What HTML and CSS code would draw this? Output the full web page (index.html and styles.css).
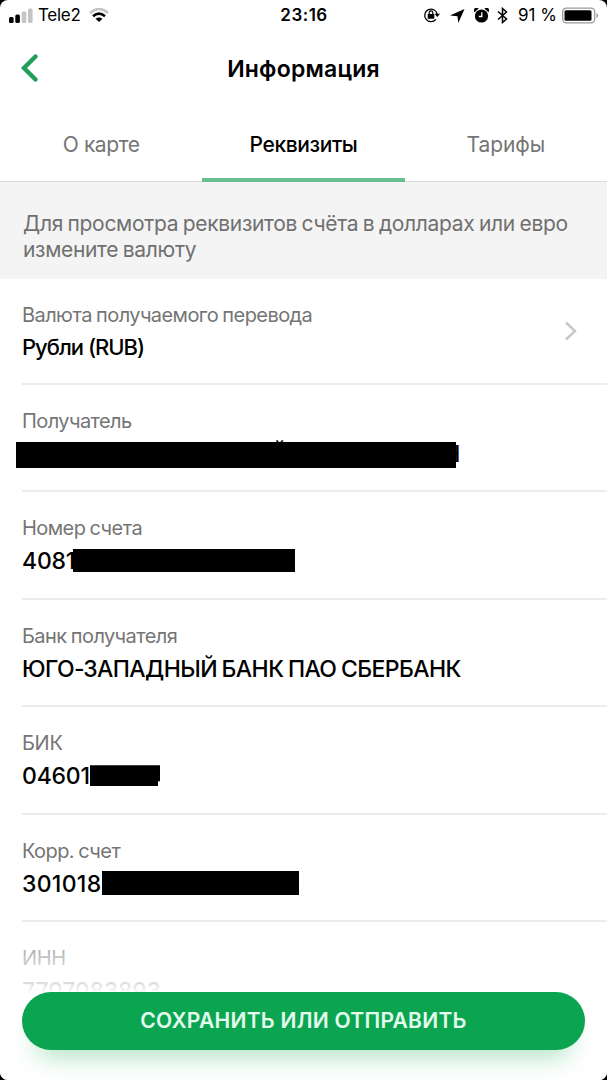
FILE: index.html
```html
<!DOCTYPE html>
<html lang="ru">
<head>
  <meta charset="UTF-8">
  <title>Информация</title>
  <link rel="stylesheet" href="styles.css">
</head>
<body>
  <div class="screen">
    <!-- Status bar -->
    <div class="status-bar">
      <div class="status-left">
        <svg class="signal" width="24" height="16" viewBox="0 0 24 16">
          <rect x="0" y="9" width="4.600" height="6" rx="1.5"/>
          <rect x="6.3" y="6.5" width="4.600" height="8.500" rx="1.5"/>
          <rect class="dim" x="12.700" y="3.500" width="4.600" height="11.500" rx="1.5"/>
          <rect class="dim" x="19" y="0.500" width="4.600" height="14.500" rx="1.5"/>
        </svg>
        <span class="carrier">Tele2</span>
        <svg class="wifi" width="20" height="15" viewBox="0 0 20 15">
          <path class="dim" d="M1 5 Q10 -3 19 5" />
          <path d="M4 8.200 Q10 3.200 16 8.200"/>
          <path class="fill" d="M10 14 L6.500 10.800 Q10 8.200 13.500 10.800 Z"/>
        </svg>
      </div>
      <span class="clock">23:16</span>
      <div class="status-right">
        <svg class="lock" width="17" height="16" viewBox="0 0 17 16">
          <path d="M12.800 12.500 A6.300 6.300 0 1 1 14.200 7" fill="none" stroke="#000" stroke-width="1.300"/>
          <path d="M11.500 6.800 H17 L14.300 10 Z"/>
          <rect x="4.700" y="7" width="6.600" height="4.800" rx="0.500"/>
          <path d="M6.200 7 V5.700 a1.800 1.800 0 0 1 3.600 0 V7" fill="none" stroke="#000" stroke-width="1.200"/>
        </svg>
        <svg class="location" width="15" height="14" viewBox="0 0 15 14">
          <path d="M14.500 0 L8.300 14 L7.500 7.200 L0 6.500 Z"/>
        </svg>
        <svg class="alarm" width="15" height="15" viewBox="0 0 15 15">
          <circle cx="7.500" cy="8" r="6.600"/>
          <path d="M0.500 4.200 A2.700 2.700 0 0 1 4.600 0.600 Z M14.500 4.200 A2.700 2.700 0 0 0 10.400 0.600 Z"/>
          <path d="M7.800 4.300 V8.500 H4.800" fill="none" stroke="#fff" stroke-width="1.300"/>
        </svg>
        <svg class="bluetooth" width="11" height="17" viewBox="0 0 11 17">
          <path d="M1 4.500 L9.500 12 L5.500 15.500 V1.500 L9.500 5 L1 12.500" fill="none" stroke="#000" stroke-width="1.500"/>
        </svg>
        <span class="percent">91 %</span>
        <svg class="battery" width="37" height="17" viewBox="0 0 37 17">
          <rect x="0.700" y="1.200" width="32" height="14.600" rx="3.500" fill="none" stroke="#999" stroke-width="1.300"/>
          <rect x="2.500" y="3.200" width="27" height="10.600" rx="1.500"/>
          <path d="M34.500 6 Q36.200 6.500 36.200 8.500 Q36.200 10.500 34.500 11 Z" fill="#999"/>
        </svg>
      </div>
    </div>

    <div class="nav-bar">
      <svg class="back" width="18" height="30" viewBox="0 0 18 30">
        <path d="M15.500 3.500 L4 15 L15.500 26.500"/>
      </svg>
      <h1>Информация</h1>
    </div>

    <div class="tabs">
      <div class="tab">О карте</div>
      <div class="tab active">Реквизиты</div>
      <div class="tab rates">Тарифы</div>
    </div>

    <div class="notice">Для просмотра реквизитов счёта в долларах или евро<br>измените валюту</div>

    <!-- Account details -->
    <div class="details">
      <div class="row currency">
        <div>
          <div class="label">Валюта получаемого перевода</div>
          <div class="value rub">Рубли (RUB)</div>
        </div>
        <svg class="chevron" width="14" height="22" viewBox="0 0 14 22">
          <path d="M2 2.500 L11 11 L2 19.500"/>
        </svg>
      </div>
      <div class="row">
        <div class="label">Получатель</div>
        <div class="value recipient"><span>Й</span><span>Н</span><i class="mask mask-name"></i></div>
      </div>
      <div class="row">
        <div class="label">Номер счета</div>
        <div class="value account">4081<i class="mask mask-account"></i></div>
      </div>
      <div class="row">
        <div class="label">Банк получателя</div>
        <div class="value bank">ЮГО-ЗАПАДНЫЙ БАНК ПАО СБЕРБАНК</div>
      </div>
      <div class="row">
        <div class="label caps">БИК</div>
        <div class="value bik">04601<i class="mask mask-bik"></i></div>
      </div>
      <div class="row">
        <div class="label">Корр. счет</div>
        <div class="value corr">301018<i class="mask mask-corr"></i></div>
      </div>
      <div class="row">
        <div class="label caps">ИНН</div>
        <div class="value inn">7707083893</div>
      </div>
    </div>

    <div class="footer">
      <button class="save">СОХРАНИТЬ ИЛИ ОТПРАВИТЬ</button>
    </div>
  </div>
</body>
</html>
```
FILE: styles.css
```css
* {
  box-sizing: border-box;
}
body {
  margin: 0;
  background-color: #000;
  font-family: Inter, "Liberation Sans", sans-serif;
}
.screen {
  position: relative;
  height: 1080px;
  overflow: hidden;
  background-color: #fff;
  border-radius: 8px;
}

/* Status bar */
.status-bar {
  display: grid;
  grid-template-columns: 1fr auto 1fr;
  align-items: center;
  height: 31px;
  padding: 0 8px 0 9px;
  font-size: 17px;
  line-height: 31px;
}
.status-left, .status-right {
  display: flex;
  align-items: center;
}
.status-right {
  justify-content: flex-end;
}
.dim {
  fill: #c4c4c4;
}
.carrier {
  margin-left: 5px;
  letter-spacing: -0.3px;
}
.wifi {
  margin-left: 9px;
}
.wifi path {
  fill: none;
  stroke: #000;
  stroke-width: 2.6;
}
.wifi .dim {
  stroke: #c4c4c4;
}
.wifi .fill {
  fill: #000;
  stroke: none;
}
.clock {
  font-weight: 600;
  letter-spacing: 0.5px;
}
.lock {
  margin-top: -1px;
}
.location {
  margin-left: 10px;
}
.alarm {
  margin-left: 9px;
}
.bluetooth {
  margin-left: 8px;
}
.percent {
  margin-left: 10px;
  white-space: nowrap;
}
.battery {
  margin-left: 5px;
}

/* Header */
.nav-bar {
  position: relative;
  height: 77px;
}
.nav-bar h1 {
  margin: 0;
  text-align: center;
  font-size: 23px;
  font-weight: 600;
  line-height: 76px;
  letter-spacing: 0.2px;
}
.back {
  position: absolute;
  left: 20px;
  top: 22px;
}
.back path {
  fill: none;
  stroke: #21a05d;
  stroke-width: 4.4;
  stroke-linecap: round;
}

.tabs {
  display: grid;
  grid-template-columns: repeat(3, 1fr);
  height: 74px;
  border-bottom: 1px solid #dcdcdc;
  text-align: center;
  font-size: 21px;
  line-height: 73px;
  letter-spacing: -0.4px;
  color: #757575;
}
.tab.active {
  height: 74px;
  border-bottom: 4px solid #67bf92;
  color: #000;
  font-weight: 500;
}
.rates {
  letter-spacing: -0.1px;
}

.notice {
  height: 97px;
  padding: 29px 23px 0;
  background-color: #f4f4f4;
  color: #707070;
  font-size: 21px;
  line-height: 26px;
  letter-spacing: -0.32px;
  word-spacing: -1px;
  white-space: nowrap;
}

/* Rows */
.details {
  padding-left: 22px;
}
.row {
  height: 107.6px;
  padding-top: 23px;
  border-bottom: 2px solid #ececec;
}
.currency {
  display: flex;
  justify-content: space-between;
  height: 105.5px;
}
.label {
  color: #757575;
  font-size: 20px;
  line-height: 26px;
  letter-spacing: -0.57px;
  word-spacing: -0.8px;
}
.caps {
  letter-spacing: -0.3px;
}
.value {
  display: flex;
  position: relative;
  margin-top: 5px;
  font-size: 23px;
  font-weight: 500;
  line-height: 30px;
  white-space: nowrap;
}
.rub {
  margin-top: 4px;
  font-size: 22px;
  letter-spacing: -1px;
}
.account {
  letter-spacing: -0.2px;
}
.bank {
  letter-spacing: -0.58px;
  word-spacing: -1px;
}
.bik {
  letter-spacing: -0.2px;
}
.corr {
  letter-spacing: 0.3px;
}
.inn {
  letter-spacing: -0.2px;
}
.chevron {
  margin: 18px 29px 0 0;
}
.chevron path {
  fill: none;
  stroke: #c7c7cc;
  stroke-width: 2.5;
}
.mask {
  position: absolute;
  background-color: #000;
}
.recipient {
  justify-content: space-between;
  width: 438.5px;
  padding-left: 249px;
}
.mask-name {
  left: -6px;
  top: 3px;
  width: 440px;
  height: 26px;
}
.mask-account {
  left: 51px;
  top: 3px;
  width: 222px;
  height: 23px;
}
.mask-bik {
  left: 68px;
  top: 4px;
  width: 70px;
  height: 21px;
  clip-path: polygon(0 0, 100% 0, 100% 16px, 68px 16px, 68px 100%, 0 100%);
}
.mask-corr {
  left: 80px;
  top: 2px;
  width: 197px;
  height: 24px;
}

/* Bottom button over the fading list */
.footer {
  position: absolute;
  left: 0;
  right: 0;
  bottom: 0;
  height: 156px;
  padding: 67.5px 22px 0;
  background: linear-gradient(rgba(255,255,255,0), rgba(255,255,255,0.58) 34px, rgba(255,255,255,0.9) 62px, #fff 70px);
}
.save {
  display: block;
  width: 100%;
  height: 58.5px;
  padding: 0;
  border: 0;
  border-radius: 30px;
  background-color: #0ba551;
  box-shadow: 0 20px 26px -14px rgba(11,165,81,0.35);
  color: #e3fbed;
  font-family: inherit;
  font-size: 21px;
  font-weight: 600;
  letter-spacing: 0.28px;
}
```
